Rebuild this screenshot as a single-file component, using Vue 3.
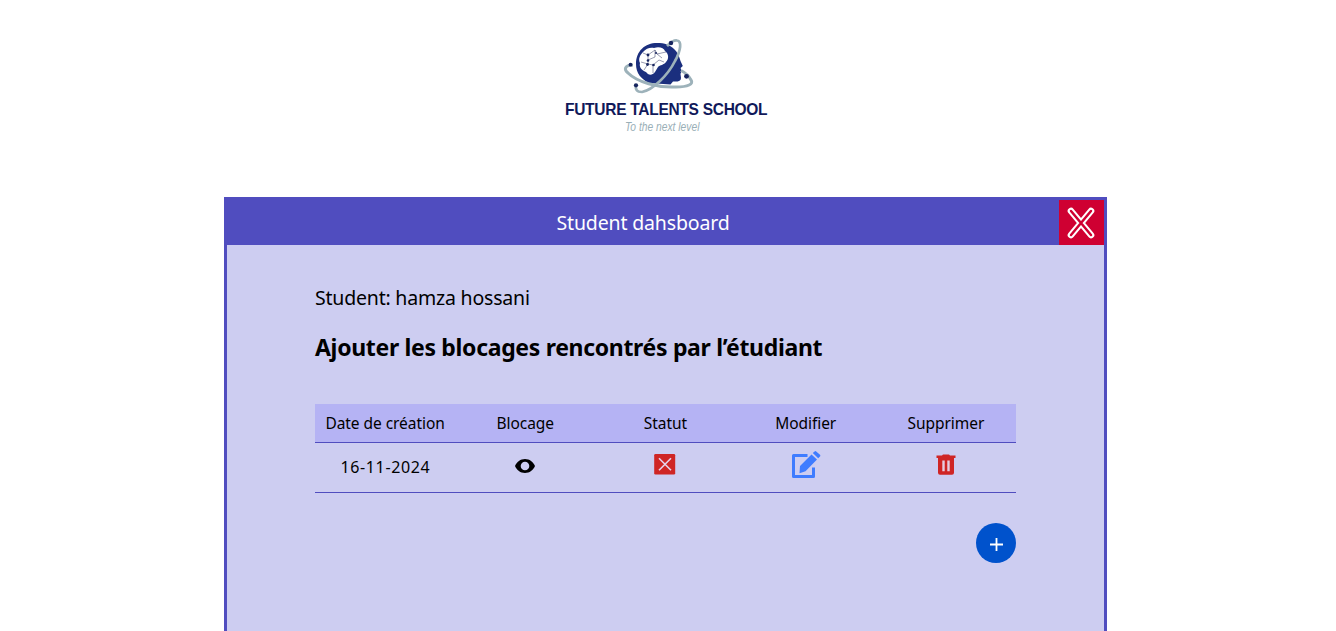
<script setup>
const columns = [
  { label: 'Date de création', cls: 'date' },
  { label: 'Blocage', cls: 'block' },
  { label: 'Statut', cls: 'status' },
  { label: 'Modifier', cls: 'edit' },
  { label: 'Supprimer', cls: 'delete' },
]
const rows = [{ date: '16-11-2024' }]
</script>

<template>
  <div class="page">
    <header class="brand">
      <svg class="emblem" viewBox="0 0 100 70" width="100" height="70" aria-hidden="true">
        <path d="M57 14.5C66 18 69 25 70.5 31L72.8 36 70.6 38 71.5 41 70.5 44 71 48C71 51 68 52 63 51.5L60.5 54.5 39 53C31 49 26 43 26 34C26 21 35 13 47 13C51 13 54 13.4 57 14.5Z" fill="#1b2f7e" />
        <path d="M33 22C36 18 41 17 44 18C49 16 54 18 55 21C59 24 59 29 56 32C54 35 50 35 48 37L45 42C42 46 38 45 36 42C31 40 29 37 30 33C28 29 30 25 33 22Z" fill="#fff" />
        <path d="M33 23L38 25 45 20 47 24 56 22M38 25V34L43 35 49 30 54 32M31 32L38 34 34 40M43 35V43M45 20V27L38 30M47 24L52 28" fill="none" stroke="#55597d" stroke-width=".6" />
        <g fill="none" stroke="#9db2ba" stroke-width="3">
          <path d="M23 35C14 35 14 40 18 43C27 52 48 58 66 57C78 57 84 54 81 50C79 46 74 42 71 40.5" />
          <path d="M26 54C25 60 27 62 32 62C43 60 58 45 65 31C71 20 72 11 67 10.5C64 10 61 12 57 16" stroke-width="2.7" />
        </g>
        <g fill="#17255f">
          <circle cx="61" cy="13" r="2.2" /><circle cx="20.5" cy="34.7" r="1.9" />
          <circle cx="26" cy="55.3" r="2.1" /><circle cx="76.5" cy="46.3" r="2.4" />
          <circle cx="38" cy="25" r="1.4" /><circle cx="38" cy="30.5" r="1.3" />
          <circle cx="37.5" cy="34.5" r="1.4" /><circle cx="43.5" cy="35" r="1.3" />
          <circle cx="46" cy="23" r="1" />
        </g>
      </svg>
      <div class="name">FUTURE TALENTS SCHOOL</div>
      <div class="tagline">To the next level</div>
    </header>

    <main class="card">
      <div class="bar">
        <h1>Student dahsboard</h1>
        <button class="close" aria-label="Close">
          <svg viewBox="0 0 45 45" width="45" height="45">
            <path d="M12 11L32 35M32 11L12 35" stroke="#fff" stroke-width="6.6" stroke-linecap="round" />
            <path d="M12 11L32 35M32 11L12 35" stroke="#cf0032" stroke-width="2.5" stroke-linecap="round" />
          </svg>
        </button>
      </div>
      <div class="content">
        <p class="student">Student: hamza hossani</p>
        <h2>Ajouter les blocages rencontrés par l’étudiant</h2>
        <div class="grid head">
          <div v-for="c in columns" :key="c.cls"><span :class="c.cls">{{ c.label }}</span></div>
        </div>
        <div v-for="r in rows" :key="r.date" class="grid row">
          <div><span class="value">{{ r.date }}</span></div>
          <div>
            <svg class="eye" viewBox="0 0 20 14" width="20" height="14">
              <path fill-rule="evenodd" d="M10 0C5.5 0 1.7 2.8 0 7C1.7 11.2 5.5 14 10 14S18.3 11.2 20 7C18.3 2.8 14.5 0 10 0ZM10 2.7A4.3 4.3 0 0 1 10 11.3A4.3 4.3 0 0 1 10 2.7Z" />
            </svg>
          </div>
          <div>
            <svg class="state" viewBox="0 0 22 22" width="22" height="22">
              <rect x=".2" y=".9" width="21" height="20.6" rx="1.3" fill="#cf2525" />
              <path d="M5 5.3L17 17.3M17 5.3L5 17.3" stroke="#e5d3ec" stroke-width="1.6" />
            </svg>
          </div>
          <div>
            <svg class="pencil" viewBox="0 0 30 28" width="30" height="28">
              <path d="M16.5 4.5H2.5V25.500H22.500V16.5" fill="none" stroke="#3f7cff" stroke-width="3" stroke-linejoin="round" />
              <path d="M20.500 3.400L26 8.600 14.500 20.300 8.500 22.300 9 15ZM21.800 2L23.600.4Q24.400-.2 25.200.5L29 3.800Q29.700 4.600 29 5.400L27.200 7.300Z" fill="#3f7cff" />
            </svg>
          </div>
          <div>
            <svg class="trash" viewBox="0 0 20 22" width="20" height="22">
              <path d="M.5 1.5H6L7 .5H13L14 1.5H19.5V4H18V18.8Q18 20.800 16 20.800H4Q2 20.800 2 18.800V4H.5Z" fill="#cf2525" />
              <path d="M6.3 6.5H8.7V17.3H6.3ZM11.3 6.5H13.7V17.3H11.3Z" fill="#e5cce0" />
            </svg>
          </div>
        </div>
        <button class="add" aria-label="Ajouter">
          <svg viewBox="0 0 40 40" width="40" height="40">
            <path d="M14 21.5H27M20.5 15V28" stroke="#fff" stroke-width="1.8" />
          </svg>
        </button>
      </div>
    </main>
  </div>
</template>

<style>
body { background: #fff; }
</style>

<style scoped>
.page {
  height: 100vh;
  overflow: hidden;
  display: flex;
  flex-direction: column;
  font-family: "Noto Sans", "Open Sans", sans-serif;
  color: #000;
}
.brand {
  height: 167px;
  flex: none;
  padding-top: 30px;
  width: 240px;
  margin-left: 555px;
  white-space: nowrap;
}
.emblem { display: block; margin-left: 55px; }
.name {
  width: 216px;
  margin: -1px 0 0 10px;
  font: bold 16.5px/20px "Liberation Sans", Arial, sans-serif;
  letter-spacing: -0.3px;
  color: #10195a;
  transform: scaleX(0.94);
  transform-origin: left;
}
.tagline {
  width: 100px;
  margin: 0 0 0 70px;
  font: italic 13px/15px "Liberation Sans", Arial, sans-serif;
  color: #9aafb7;
  transform: scaleX(0.79);
  transform-origin: left;
}
.card {
  width: 877px;
  height: 700px;
  flex: none;
  margin-left: 224px;
  border: 3px solid #504dbf;
  background: #cdcdf1;
}
.bar { display: flex; height: 45px; background: #504dbf; }
h1 {
  flex: 1;
  margin: 0;
  text-align: center;
  font-size: 19.5px;
  font-weight: 400;
  line-height: 45px;
  color: #fff;
  letter-spacing: -0.15px;
}
button { border: 0; padding: 0; }
button svg { display: block; }
.close { width: 45px; height: 45px; background: #cf0032; }
.content {
  display: flex;
  flex-direction: column;
  width: 701px;
  margin-left: 88px;
  padding-top: 38px;
}
.student { margin: 0; font-size: 19.5px; line-height: 30px; letter-spacing: -0.2px; }
h2 { margin: 17px 0 0; font-size: 23px; line-height: 35px; letter-spacing: -0.32px; white-space: nowrap; }
.grid { display: grid; grid-template-columns: repeat(5, 1fr); border-bottom: 1px solid #504dbf; }
.grid > div { display: flex; justify-content: center; white-space: nowrap; }
.head { margin-top: 39px; height: 38px; line-height: 38px; background: #b5b3f4; font-size: 15.5px; letter-spacing: -0.05px; }
.row { height: 49px; font-size: 16px; line-height: 49px; }
.value { letter-spacing: 0.65px; margin-right: -0.65px; }
.eye { margin-top: 16px; }
.state { margin-top: 10px; }
.pencil { margin-top: 8px; }
.trash { margin-top: 11px; }
.add {
  align-self: flex-end;
  margin-top: 30px;
  width: 40px;
  height: 40px;
  border-radius: 50%;
  background: #0052cc;
}
</style>
